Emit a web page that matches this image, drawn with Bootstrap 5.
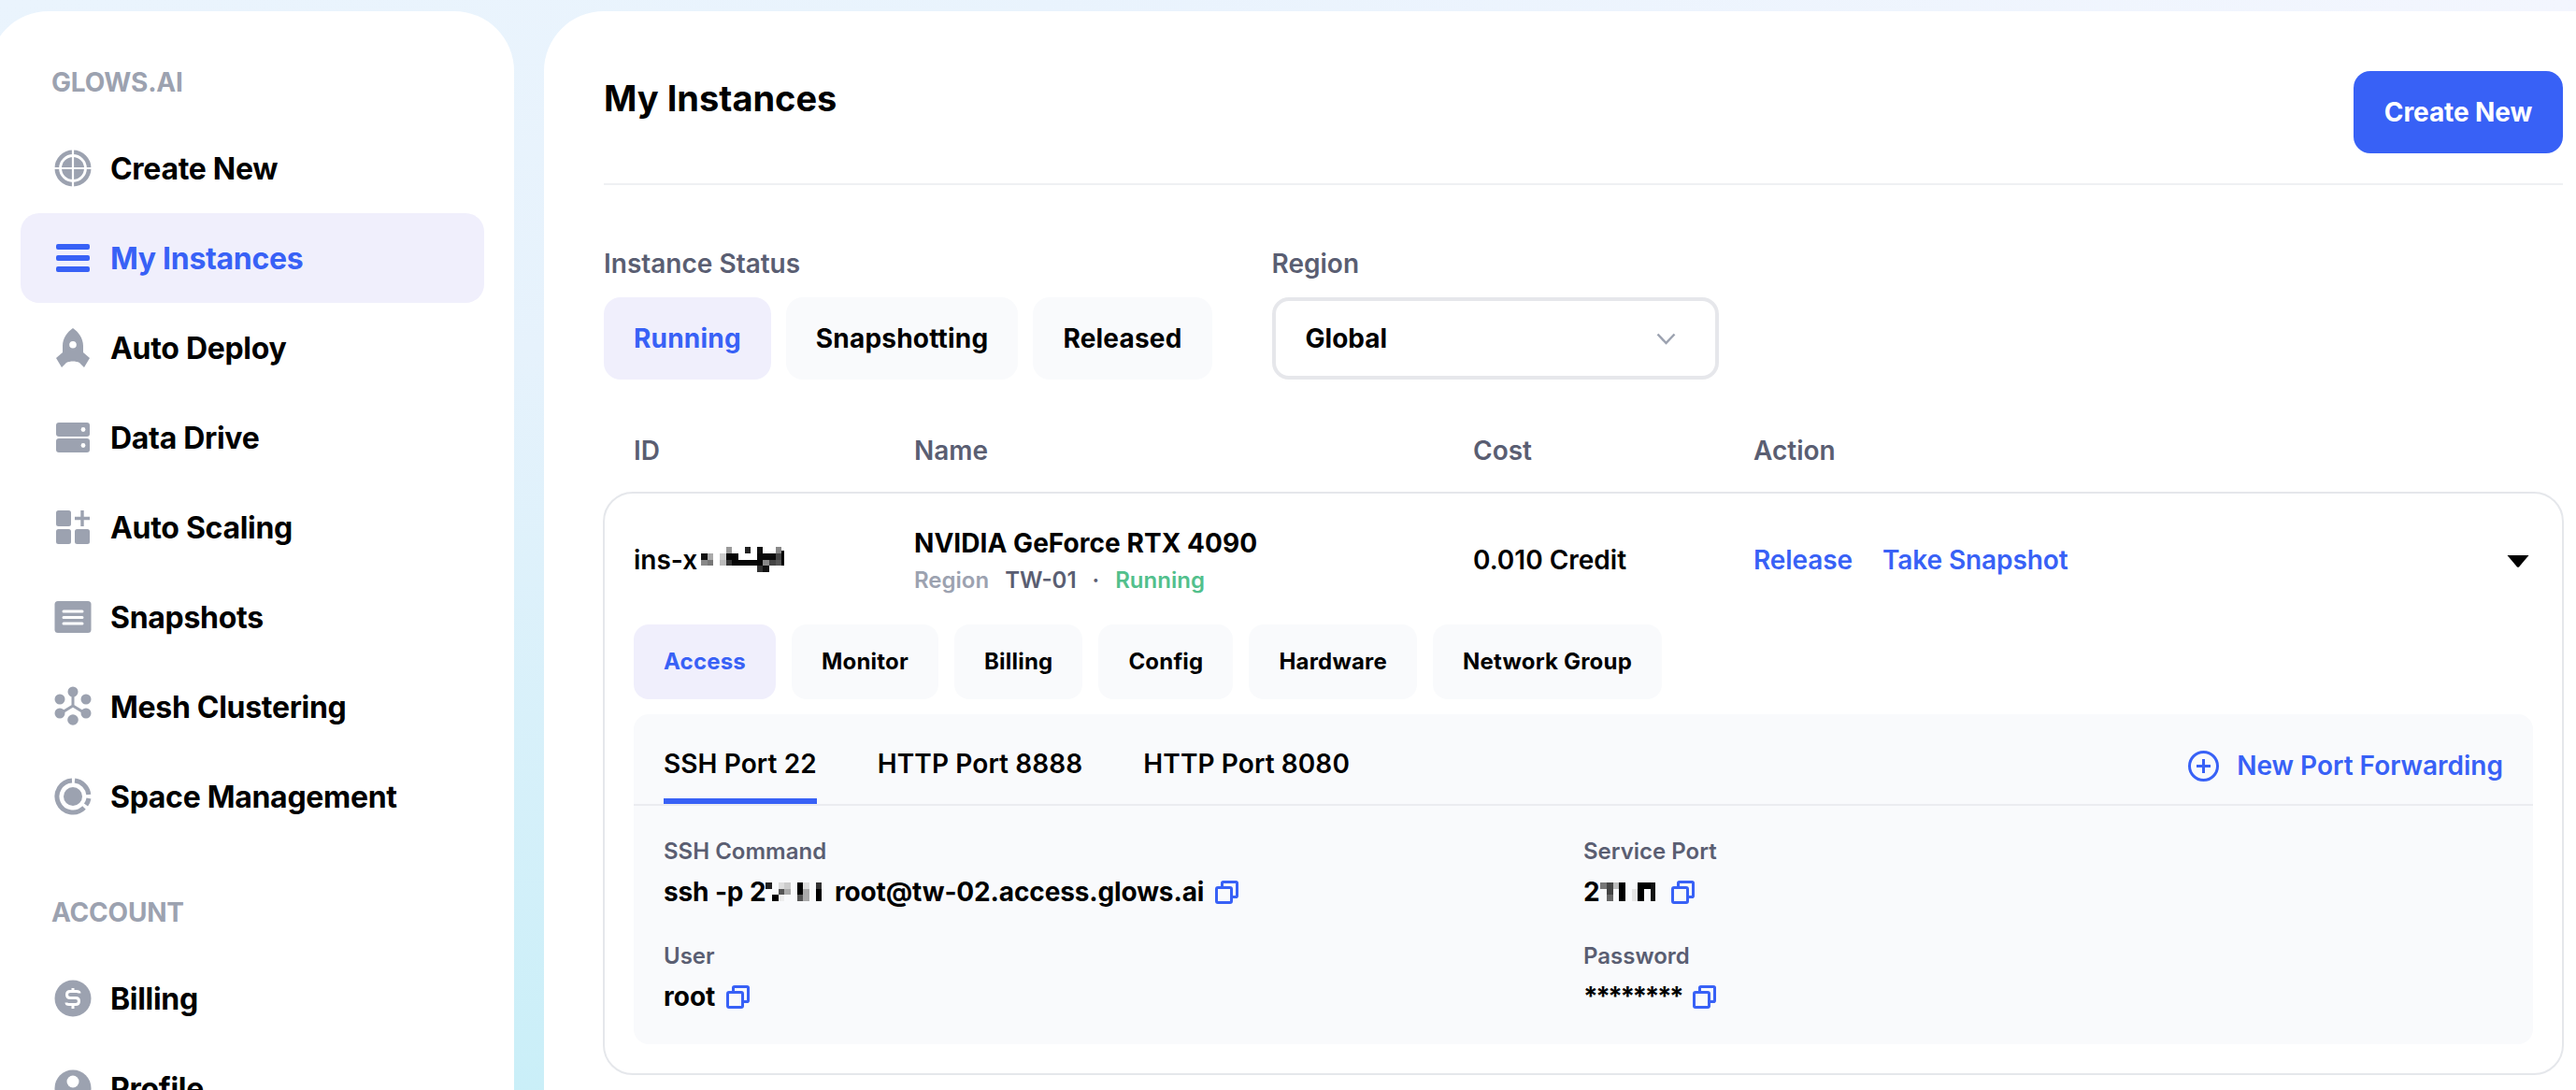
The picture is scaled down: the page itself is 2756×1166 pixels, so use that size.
<!DOCTYPE html>
<html lang="en">
<head>
<meta charset="UTF-8" />
<meta name="viewport" content="width=device-width, initial-scale=1.0" />
<title>My Instances</title>
<link href="https://cdn.jsdelivr.net/npm/bootstrap@5.3.3/dist/css/bootstrap.min.css" rel="stylesheet">
<style>
  html, body { height: 100%; }
  body {
    font-family: "Inter", "Liberation Sans", sans-serif;
    color: #000;
    overflow: hidden;
    background: linear-gradient(175deg, #eaf4fd 0%, #e6f2fc 30%, #c3eef7 100%);
  }
  .top-tint { position: absolute; top: 0; left: 40%; right: 0; height: 12px; background: linear-gradient(90deg, #e9f3fd, #f3f6fe); }

  .app-shell { padding-top: 12px; height: 100vh; gap: 32px; position: relative; }

  /* sidebar */
  .side-panel { width: 562px; margin-left: -12px; padding: 56px 32px 0 34px; background: #fff; border-radius: 64px 64px 0 0; flex: none; }
  .side-label { font-size: 28px; line-height: 40px; font-weight: 700; letter-spacing: -0.2px; color: #9ca2b0; padding-left: 33px; margin-bottom: 24px; }
  .side-label.second { margin-top: 56px; }
  .side-link { height: 96px; padding-left: 36px; gap: 20px; font-size: 32px; font-weight: 700; letter-spacing: -0.3px; color: #000; border-radius: 20px; text-decoration: none; }
  .side-link span { padding-top: 2px; }
  .side-link.active { background: #f0effc; color: #3861f6; }
  .side-link svg { width: 40px; height: 44px; flex: none; }

  /* main */
  .main-panel { flex: 1; min-width: 0; padding: 64px 14px 0 64px; background: #fff; border-radius: 64px 0 0 0; }
  .page-head { padding-bottom: 32px; border-bottom: 2px solid #eff0f3; }
  .page-title { font-size: 38px; line-height: 58px; font-weight: 700; margin: 0; }
  .btn.create-btn { background: #3861f6; color: #fff; border: 0; width: 224px; height: 88px; border-radius: 18px; font-size: 28px; font-weight: 700; letter-spacing: -0.1px; }

  .filter-row { margin-top: 64px; gap: 64px; }
  .field-label { font-size: 28px; line-height: 40px; font-weight: 600; color: #5a5e72; margin-bottom: 16px; }
  .btn.chip { height: 88px; padding: 0 32px; border: 0; border-radius: 18px; background: #f9fafc; font-size: 28px; font-weight: 700; letter-spacing: 0.2px; color: #000; }
  .btn.chip.active { background: #f0effc; color: #3861f6; }
  .region-box { width: 478px; height: 88px; padding: 0 42px 0 32px; border: 4px solid #e6e7eb; border-radius: 18px; font-size: 28px; font-weight: 700; }

  .grid-cols { display: grid; grid-template-columns: 300px 598px 300px 1fr; align-items: center; }
  .table-head { margin-top: 56px; padding-left: 32px; font-size: 28px; line-height: 40px; font-weight: 600; color: #5a5e72; margin-bottom: 24px; }

  .card.instance-card { margin: 0 -1px; border: 2px solid #e5e7eb; border-radius: 32px; padding: 35px 31px 31px; background: #fff; }
  .gpu-name { font-size: 28px; line-height: 36px; font-weight: 700; letter-spacing: 0.05px; }
  .gpu-meta { font-size: 24px; line-height: 36px; font-weight: 600; margin-top: 4px; color: #5a5e72; }
  .meta-dim { color: #9ca2b0; }
  .meta-ok { color: #52c08c; }
  .meta-gap { margin-left: 17px; }
  .meta-dot { margin: 0 17px; }
  .cell-text { font-size: 28px; font-weight: 600; line-height: 36px; padding-bottom: 5px; }
  .act-cell { padding-bottom: 5px; }
  .act-links { column-gap: 32px; }
  .act-link { color: #3861f6; font-size: 28px; font-weight: 600; letter-spacing: -0.1px; text-decoration: none; }
  .caret-icon { margin-right: 4px; margin-top: 3px; }

  .sub-tabs { margin-top: 29px; gap: 17px; }
  .btn.sub-tab { height: 80px; padding: 0 32px; border: 0; border-radius: 16px; background: #f9fafc; font-size: 24px; font-weight: 700; letter-spacing: 0.2px; color: #000; }
  .btn.sub-tab.active { background: #f0effc; color: #3861f6; }

  .access-panel { margin-top: 16px; background: #f9fafc; border-radius: 16px; padding-bottom: 31px; }
  .port-bar { padding: 0 32px; border-bottom: 2px solid #ebecf0; }
  .port-tab { padding: 33px 0 17px; line-height: 40px; border-bottom: 6px solid transparent; font-size: 28px; font-weight: 600; letter-spacing: 0.1px; color: #000; text-decoration: none; }
  .port-tab.active { border-bottom-color: #3861f6; }
  .port-add { color: #3861f6; font-size: 28px; font-weight: 600; text-decoration: none; gap: 19px; padding-top: 14px; }
  .port-tabs { gap: 65px; }

  .detail-grid { display: grid; grid-template-columns: 984px 1fr; row-gap: 32px; padding: 32px 32px 0; }
  .detail-label { font-size: 24px; line-height: 34px; font-weight: 600; color: #5a5e72; margin-bottom: 6px; }
  .detail-value { font-size: 28px; line-height: 40px; font-weight: 700; gap: 12px; }
  .ssh-text { letter-spacing: -0.13px; }
  .stars { letter-spacing: -2.5px; }
  .copy-icon { width: 25px; height: 25px; flex: none; }
  .mosaic { flex: none; display: inline-block; vertical-align: baseline; }
  .id-mosaic { margin-left: 4px; margin-bottom: 1px; }
</style>
</head>
<body class="position-relative">
<div class="top-tint"></div>

<svg width="0" height="0" class="position-absolute">
  <symbol id="copy" viewBox="0 0 25 25"><rect x="1.500" y="7.500" width="16" height="16" rx="1.500" fill="none" stroke="#3861f6" stroke-width="3"/><path d="M7.500 7V2.800Q7.500 1.500 8.800 1.500H22.200Q23.500 1.500 23.500 2.800V16.200Q23.500 17.500 22.200 17.500H17.500" fill="none" stroke="#3861f6" stroke-width="3"/></symbol>
</svg>

<div class="app-shell d-flex">

  <!-- Sidebar -->
  <aside class="side-panel">
    <div class="side-label">GLOWS.AI</div>
    <a class="side-link d-flex align-items-center" href="#">
      <svg viewBox="0 0 40 44" fill="none"><circle cx="20" cy="22" r="17.200" stroke="#9ca2b0" stroke-width="4.600"/><circle cx="20" cy="22" r="12" fill="#9ca2b0"/><path d="M20 2v40M0 22h40" stroke="#fff" stroke-width="2.200"/></svg>
      <span>Create New</span></a>
    <a class="side-link active d-flex align-items-center" href="#">
      <svg viewBox="0 0 40 44"><rect x="2" y="7" width="36" height="6" rx="2" fill="#3861f6"/><rect x="2" y="19" width="36" height="6" rx="2" fill="#3861f6"/><rect x="2" y="31" width="36" height="6" rx="2" fill="#3861f6"/></svg>
      <span>My Instances</span></a>
    <a class="side-link d-flex align-items-center" href="#">
      <svg viewBox="0 0 40 44"><path fill-rule="evenodd" fill="#9ca2b0" d="M20 1C26 5 31 12 31 20V27L38 33 32 43 27 38C23 36 17 36 13 38L8 43 2 33 9 27V20C9 12 14 5 20 1ZM20 15a3.800 3.800 0 1 0 0 7.600a3.800 3.800 0 1 0 0-7.600Z"/></svg>
      <span>Auto Deploy</span></a>
    <a class="side-link d-flex align-items-center" href="#">
      <svg viewBox="0 0 40 44"><rect x="2" y="6" width="36" height="15" rx="3" fill="#9ca2b0"/><rect x="2" y="23" width="36" height="15" rx="3" fill="#9ca2b0"/><circle cx="31" cy="13.500" r="2.400" fill="#fff"/><circle cx="31" cy="30.500" r="2.400" fill="#fff"/></svg>
      <span>Data Drive</span></a>
    <a class="side-link d-flex align-items-center" href="#">
      <svg viewBox="0 0 40 44"><rect x="2" y="4" width="16" height="17" rx="2.500" fill="#9ca2b0"/><rect x="2" y="24" width="16" height="16" rx="2.500" fill="#9ca2b0"/><rect x="22" y="24" width="16" height="16" rx="2.500" fill="#9ca2b0"/><path d="M30 4v17M22 12.500h16" stroke="#9ca2b0" stroke-width="3.400"/></svg>
      <span>Auto Scaling</span></a>
    <a class="side-link d-flex align-items-center" href="#">
      <svg viewBox="0 0 40 44"><rect x="0.500" y="5" width="39" height="34" rx="3.500" fill="#9ca2b0"/><path d="M10 16h20M10 22.500h20M10 29h20" stroke="#fff" stroke-width="3" stroke-linecap="round"/></svg>
      <span>Snapshots</span></a>
    <a class="side-link d-flex align-items-center" href="#">
      <svg viewBox="0 0 40 44" fill="#9ca2b0"><path d="M20 6V21M20 21L7 29M20 21L33 29" stroke="#9ca2b0" stroke-width="3" fill="none"/><circle cx="20" cy="6" r="5.500"/><circle cx="6" cy="14" r="5.500"/><circle cx="34" cy="14" r="5.500"/><circle cx="6" cy="29" r="5.500"/><circle cx="34" cy="29" r="5.500"/><circle cx="20" cy="36" r="5.800"/></svg>
      <span>Mesh Clustering</span></a>
    <a class="side-link d-flex align-items-center" href="#">
      <svg viewBox="0 0 40 44" fill="none"><circle cx="20" cy="22" r="10" fill="#9ca2b0"/><path d="M19 5A17 17 0 1 0 32 34" stroke="#9ca2b0" stroke-width="5"/><path d="M22 5A17 17 0 0 1 36.800 20" stroke="#9ca2b0" stroke-width="5"/><path d="M37 24A17 17 0 0 1 34 31" stroke="#9ca2b0" stroke-width="5"/></svg>
      <span>Space Management</span></a>
    <div class="side-label second">ACCOUNT</div>
    <a class="side-link d-flex align-items-center" href="#">
      <svg viewBox="0 0 40 44"><circle cx="20" cy="22" r="19.500" fill="#9ca2b0"/><path d="M27 16.500C27 15 25.500 14.500 24 14.500H17C14.500 14.500 13.500 16 13.500 18S14.500 21.500 17 21.500H23C25.500 21.500 26.500 23 26.500 25S25.500 28.500 23 28.500H16C14.500 28.500 13 28 13 26.500M20 11V14.500M20 28.500V33" stroke="#fff" stroke-width="3" fill="none"/></svg>
      <span>Billing</span></a>
    <a class="side-link d-flex align-items-center" href="#">
      <svg viewBox="0 0 40 44"><circle cx="20" cy="22" r="19.500" fill="#9ca2b0"/><circle cx="20" cy="15" r="6.500" fill="#fff"/><path d="M7 35C9 27 31 27 33 35A19 19 0 0 1 7 35Z" fill="#fff"/></svg>
      <span>Profile</span></a>
  </aside>

  <!-- Main -->
  <main class="main-panel">
    <div class="page-head d-flex justify-content-between align-items-start">
      <h1 class="page-title">My Instances</h1>
      <button class="btn create-btn">Create New</button>
    </div>

    <div class="filter-row d-flex">
      <div>
        <div class="field-label">Instance Status</div>
        <div class="d-flex gap-3">
          <button class="btn chip active">Running</button>
          <button class="btn chip">Snapshotting</button>
          <button class="btn chip">Released</button>
        </div>
      </div>
      <div>
        <div class="field-label">Region</div>
        <div class="region-box d-flex align-items-center justify-content-between">
          <span>Global</span>
          <svg width="21" height="13" viewBox="0 0 21 13" fill="none"><path d="M1.500 1.500L10.500 11L19.500 1.500" stroke="#9ca2b0" stroke-width="2.500"/></svg>
        </div>
      </div>
    </div>

    <div class="table-head grid-cols">
      <div>ID</div><div>Name</div><div>Cost</div><div>Action</div>
    </div>

    <div class="card instance-card">
      <div class="grid-cols">
        <div class="cell-text d-flex align-items-center">ins-x<svg class="mosaic id-mosaic" width="93" height="27" viewBox="0 0 14 4" shape-rendering="crispEdges">
          <rect x="4" y="0" width="1" height="1" fill="#999"/><rect x="7" y="0" width="1" height="1" fill="#222"/><rect x="9" y="0" width="1" height="1" fill="#111"/><rect x="12" y="0" width="1" height="1" fill="#888"/>
          <rect x="0" y="1" width="1" height="1" fill="#111"/><rect x="1" y="1" width="1" height="1" fill="#aaa"/><rect x="3" y="1" width="1" height="1" fill="#ccc"/><rect x="4" y="1" width="2" height="1" fill="#050505"/><rect x="9" y="1" width="3" height="1" fill="#0a0a0a"/><rect x="12" y="1" width="1" height="1" fill="#444"/><rect x="13" y="0.500" width="0.400" height="2.500" fill="#000"/>
          <rect x="0" y="2" width="1" height="1" fill="#888"/><rect x="1" y="2" width="1" height="1" fill="#777"/><rect x="3" y="2" width="1" height="1" fill="#bbb"/><rect x="4" y="2" width="1" height="1" fill="#333"/><rect x="5" y="2" width="5" height="1" fill="#060606"/><rect x="10" y="2" width="1" height="1" fill="#888"/><rect x="11" y="2" width="1" height="1" fill="#444"/><rect x="12" y="2" width="1" height="1" fill="#555"/>
          <rect x="9" y="3" width="1" height="1" fill="#333"/><rect x="10" y="3" width="1" height="1" fill="#111"/>
        </svg></div>
        <div>
          <div class="gpu-name">NVIDIA GeForce RTX 4090</div>
          <div class="gpu-meta"><span class="meta-dim">Region</span><span class="meta-gap">TW-01</span><span class="meta-dot">·</span><span class="meta-ok">Running</span></div>
        </div>
        <div class="cell-text">0.010 Credit</div>
        <div class="act-cell d-flex align-items-center justify-content-between">
          <div class="act-links d-flex">
            <a class="act-link" href="#">Release</a>
            <a class="act-link" href="#">Take Snapshot</a>
          </div>
          <svg class="caret-icon" width="24" height="13" viewBox="0 0 24 13"><path d="M0.500 0H23.500L13 12.500Q12 13 11 12.500Z" fill="#000"/></svg>
        </div>
      </div>

      <div class="sub-tabs d-flex">
        <button class="btn sub-tab active">Access</button>
        <button class="btn sub-tab">Monitor</button>
        <button class="btn sub-tab">Billing</button>
        <button class="btn sub-tab">Config</button>
        <button class="btn sub-tab">Hardware</button>
        <button class="btn sub-tab">Network Group</button>
      </div>

      <div class="access-panel">
        <div class="port-bar d-flex justify-content-between align-items-center">
          <div class="port-tabs d-flex">
            <a class="port-tab active" href="#">SSH Port 22</a>
            <a class="port-tab" href="#">HTTP Port 8888</a>
            <a class="port-tab" href="#">HTTP Port 8080</a>
          </div>
          <a class="port-add d-flex align-items-center" href="#">
            <svg width="33" height="33" viewBox="0 0 33 33" fill="none"><circle cx="16.500" cy="16.500" r="15" stroke="#3861f6" stroke-width="3"/><path d="M16.500 9v15M9 16.500h15" stroke="#3861f6" stroke-width="3"/></svg>
            New Port Forwarding</a>
        </div>
        <div class="detail-grid">
          <div>
            <div class="detail-label">SSH Command</div>
            <div class="detail-value d-flex align-items-center"><span class="ssh-text">ssh -p 2<svg class="mosaic" width="67" height="20" viewBox="0 0 10 3" shape-rendering="crispEdges">
              <rect x="0" y="0" width="1" height="1" fill="#222"/><rect x="1" y="2" width="1" height="1" fill="#000"/>
              <rect x="2" y="0" width="1" height="1" fill="#ddd"/><rect x="2" y="1" width="1" height="1" fill="#555"/><rect x="2" y="2" width="1" height="1" fill="#eee"/>
              <rect x="3" y="0" width="1" height="1" fill="#ccc"/><rect x="3" y="1" width="1" height="1" fill="#aaa"/>
              <rect x="5" y="0" width="1" height="2" fill="#000"/><rect x="5" y="2" width="1" height="1" fill="#555"/>
              <rect x="6" y="0" width="1" height="1" fill="#ddd"/><rect x="6" y="1" width="1" height="2" fill="#aaa"/>
              <rect x="8" y="0" width="1" height="1" fill="#333"/><rect x="8" y="1" width="1" height="2" fill="#000"/>
            </svg> root@tw-02.access.glows.ai</span>
              <svg class="copy-icon"><use href="#copy"/></svg></div>
          </div>
          <div>
            <div class="detail-label">Service Port</div>
            <div class="detail-value d-flex align-items-center"><span>2<svg class="mosaic" width="64" height="20" viewBox="0 0 9.500 3" shape-rendering="crispEdges">
              <rect x="0" y="0" width="1" height="1" fill="#777"/><rect x="1" y="0" width="1" height="2" fill="#444"/><rect x="1" y="2" width="1" height="1" fill="#666"/>
              <rect x="2" y="0" width="1" height="1" fill="#bbb"/><rect x="3" y="0" width="1" height="3" fill="#000"/>
              <rect x="5" y="1" width="1" height="2" fill="#e5e5e5"/><rect x="6" y="0" width="1" height="3" fill="#000"/>
              <rect x="7" y="0" width="1" height="1" fill="#000"/><rect x="8" y="0" width="0.800" height="3" fill="#111"/>
            </svg></span>
              <svg class="copy-icon"><use href="#copy"/></svg></div>
          </div>
          <div>
            <div class="detail-label">User</div>
            <div class="detail-value d-flex align-items-center"><span>root</span>
              <svg class="copy-icon"><use href="#copy"/></svg></div>
          </div>
          <div>
            <div class="detail-label">Password</div>
            <div class="detail-value d-flex align-items-center"><span class="stars">********</span>
              <svg class="copy-icon"><use href="#copy"/></svg></div>
          </div>
        </div>
      </div>
    </div>
  </main>
</div>
<script src="https://cdn.jsdelivr.net/npm/bootstrap@5.3.3/dist/js/bootstrap.bundle.min.js"></script>
</body>
</html>
